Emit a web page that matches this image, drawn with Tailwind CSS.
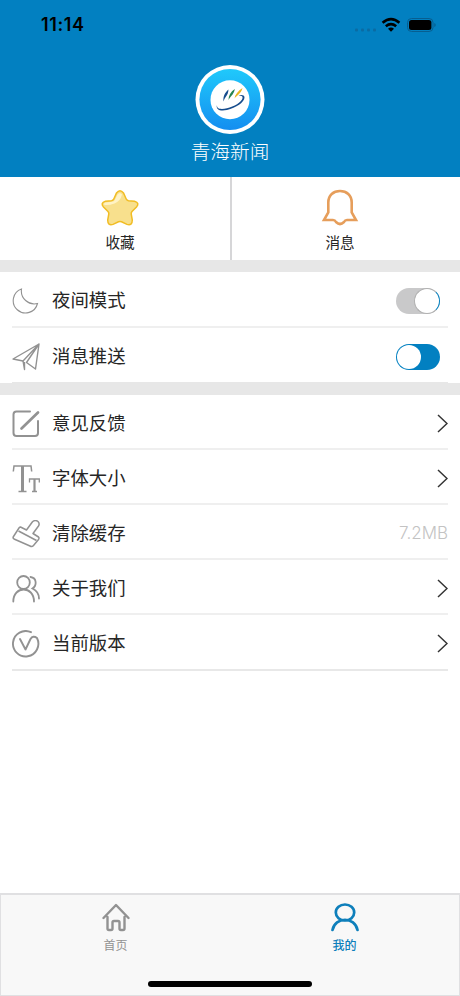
<!DOCTYPE html>
<html lang="zh-CN">
<head>
  <meta charset="UTF-8" />
  <meta name="viewport" content="width=device-width, initial-scale=1.0" />
  <title>青海新闻</title>
  <script src="https://cdn.jsdelivr.net/npm/@tailwindcss/browser@4"></script>
</head>
<body class="bg-white text-[#262626] font-['Inter','Noto_Sans_CJK_SC',sans-serif]">
<div class="w-[460px] h-[996px] flex flex-col overflow-hidden">

  <!-- Header -->
  <header class="h-[177px] shrink-0 bg-[#0280c1] flex flex-col items-center">
    <div class="w-full h-[50px] pl-[41px] pr-[24px] flex items-center justify-between text-black">
      <span class="text-[18px] font-semibold leading-none tracking-[0.6px]">11:14</span>
      <svg class="w-[82px] h-[18px]" viewBox="354 16 82 18">
        <g fill="#0a6ba3"><rect x="355" y="28.500" width="3" height="3" rx="1"/><rect x="361" y="28.500" width="3" height="3" rx="1"/><rect x="367" y="28.500" width="3" height="3" rx="1"/><rect x="373" y="28.500" width="3" height="3" rx="1"/></g>
        <g fill="none" stroke="#000" stroke-width="2.6"><path d="M382.6 22.8q8.4-7.2 16.8 0"/><path d="M385.8 26.2q5.2-4.2 10.4 0"/></g>
        <path d="M388 28.8q3-2.4 6 0l-3 3z"/>
        <rect x="407.5" y="18.5" width="25.5" height="13" rx="4" fill="none" stroke="#075e90"/>
        <rect x="409" y="20" width="22.4" height="10" rx="2.5"/>
        <path d="M434.3 23v4q1.4-.5 1.4-2t-1.4-2z" fill="#075e90"/>
      </svg>
    </div>
    <svg class="mt-[15px] w-[70px] h-[70px]" viewBox="0 0 70 70">
      <defs><linearGradient id="ring" x1="0" y1="0" x2="0" y2="1"><stop stop-color="#20c9fb"/><stop offset="1" stop-color="#148ef0"/></linearGradient></defs>
      <circle cx="35" cy="34.5" r="34.5" fill="#fff"/>
      <circle cx="35" cy="34.5" r="30.6" fill="url(#ring)"/>
      <circle cx="35" cy="34.7" r="19.5" fill="#fff"/>
      <path d="M22 40C20.500 44.500 25 46.500 32 45C41 43 49.500 37 49.500 32.500C49.500 30 46.500 29.500 43.500 30.500C46.500 30.300 48 31.300 47.500 33.300C46.500 37.500 39 41.500 32 43.200C26 44.700 21.500 44 22 40Z" fill="#164c8d"/>
      <path d="M28.500 36.500C28 31.500 29.500 28 33.500 24.500C33.300 27.500 32.500 29.500 31 31.500C29.800 33 29.300 34.500 28.500 36.500Z" fill="#164c8d"/>
      <path d="M33.500 35C33.500 30.500 35.500 27 39.800 24C39.500 27 38 29 36.500 30.800C35.300 32.300 34.500 33.300 33.500 35Z" fill="#258551"/>
      <path d="M39.500 33.500C40 29.500 43 26 47.500 23C47 26 45 28.200 43 30C41.500 31.400 40.500 32.200 39.500 33.500Z" fill="#e9b622"/>
    </svg>
    <h1 class="mt-[5px] text-[19.700px] leading-[24px] text-white font-light">青海新闻</h1>
  </header>

  <!-- Shortcuts -->
  <nav class="h-[83px] shrink-0 flex text-[14.6px] leading-[20px]">
    <a class="w-[232px] pl-[10px] border-r-2 border-[#d6d6d8] flex flex-col items-center">
      <svg class="mt-[11px] w-[40px] h-[40px]" viewBox="0 0 40 40">
        <path d="M16.500 5Q20 .5 23.500 5L26.300 11.200Q27 12.500 28.500 12.700L34.500 13.300Q40 15 36.500 19L32 23.500Q31 24.600 31.200 26L32.300 32Q32.300 38 27 36.400L21.500 33.800Q20 33.200 18.500 33.800L13 36.400Q7.700 38 7.700 32L8.800 26Q9 24.600 8 23.500L3.500 19Q0 15 5.500 13.300L11.500 12.700Q13 12.500 13.700 11.200Z" fill="#f8e08d" stroke="#f1bd25" stroke-width="1.500"/>
        <path d="M17.500 6.500Q20 3.500 22 6.500Q20.500 13 14.500 15.500Q9 17.500 4.500 17Q3 15 6 14.500L12 13.800Q14 13.500 14.800 12Z" fill="#fff3c6"/>
      </svg>
      <span class="mt-[5px]">收藏</span>
    </a>
    <a class="flex-1 pr-[12px] flex flex-col items-center">
      <svg class="mt-[11px] w-[40px] h-[40px]" viewBox="0 0 40 40" fill="none" stroke="#e69e5b" stroke-width="2.600">
        <path d="M8.300 24.500V14.500C8.300 7 13.500 3 20 3S31.700 7 31.700 14.500V24.500L36 32H27Q25 32 24 34Q20 38 16 34Q15 32 13 32H4Z"/>
      </svg>
      <span class="mt-[5px]">消息</span>
    </a>
  </nav>
  <div class="h-[12px] shrink-0 bg-[#e7e7e7]"></div>

  <!-- Switches -->
  <ul class="shrink-0 px-[12px] text-[18.4px]">
    <li class="h-[56px] pt-[4px] border-b-2 border-[#efefef] flex items-center">
      <svg class="w-[28px] h-[28px] mr-[12px]" viewBox="0 0 28 28" fill="none" stroke="#929292" stroke-width="1.100"><path d="M9.500 2A12.300 12.300 0 1 0 25.500 16.500A13 13 0 0 1 9.500 2Z"/></svg>
      <span>夜间模式</span>
      <span class="ml-auto mr-[8px] w-[44px] h-[26px] rounded-full bg-[#c9c9ca] flex justify-end">
        <i class="size-[26px] rounded-full bg-white border border-[#b0b0b0] border-r-[#0280c1] border-r-[1.5px]"></i>
      </span>
    </li>
    <li class="h-[55px] pt-[3px] border-b border-[#e7e7e7] flex items-center">
      <svg class="w-[28px] h-[28px] mr-[12px]" viewBox="0 0 28 28" fill="none" stroke="#929292" stroke-width="1.400" stroke-linejoin="round"><path d="M27 1L1 16L11 18L27 1L14.500 19.500L23.500 26Z"/><path d="M11 18L12.500 26.500V19"/></svg>
      <span>消息推送</span>
      <span class="ml-auto mr-[8px] w-[44px] h-[26px] rounded-full bg-[#0280c1] flex items-center pl-px">
        <i class="size-[24px] rounded-full bg-white"></i>
      </span>
    </li>
  </ul>
  <div class="h-[12px] shrink-0 bg-[#e7e7e7]"></div>

  <!-- Settings -->
  <ul class="shrink-0 px-[12px] text-[18.4px]">
    <li class="h-[55px] pt-[4px] border-b-2 border-[#efefef] flex items-center">
      <svg class="w-[28px] h-[28px] mr-[12px]" viewBox="0 0 28 28" fill="none" stroke="#929292" stroke-width="2" stroke-linecap="round"><path d="M18 1.500H4.500Q1.500 1.500 1.500 4.500V23Q1.500 26 4.500 26H23Q26 26 26 23V11"/><path d="M9.500 18.500L26 2.500" stroke-width="2.700"/></svg>
      <span>意见反馈</span>
      <svg class="ml-auto w-[12px] h-[20px]" viewBox="0 0 12 20" fill="none" stroke="#333" stroke-width="1.500"><path d="M2 1L11 9.500L2 18"/></svg>
    </li>
    <li class="h-[55px] pt-[4px] border-b-2 border-[#efefef] flex items-center">
      <svg class="w-[28px] h-[28px] mr-[12px]" viewBox="0 0 28 28" fill="none" stroke="#929292"><path d="M1.300 6.500L2 1H19L19.700 6.500M6.500 26.500H14.500" stroke-width="1.500"/><path d="M10.500 1V26" stroke-width="3"/><path d="M17.500 17.500V14H27.300V17.500M20 26.500H25" stroke-width="1.300"/><path d="M22.500 14V26" stroke-width="2.200"/></svg>
      <span>字体大小</span>
      <svg class="ml-auto w-[12px] h-[20px]" viewBox="0 0 12 20" fill="none" stroke="#333" stroke-width="1.500"><path d="M2 1L11 9.500L2 18"/></svg>
    </li>
    <li class="h-[55px] pt-[4px] border-b-2 border-[#efefef] flex items-center">
      <svg class="w-[28px] h-[28px] mr-[12px]" viewBox="0 0 28 28" fill="none" stroke="#929292" stroke-width="1.500" stroke-linejoin="round"><path d="M8.500 7L14.500 10L20.500 1.800Q23 -.5 26 1.500Q28 3.500 26.500 6L21 13.500L26.500 17Q27.500 18 26.500 19.500L21.500 25.500Q20 27.200 18 26L2 19Q.5 18 1.500 16.500L7 8Q7.500 6.700 8.500 7Z"/><path d="M6.500 11L24.500 20.500"/></svg>
      <span>清除缓存</span>
      <span class="ml-auto text-[17px] font-light text-[#c3c3c3]">7.2MB</span>
    </li>
    <li class="h-[55px] pt-[4px] border-b-2 border-[#efefef] flex items-center">
      <svg class="w-[28px] h-[28px] mr-[12px]" viewBox="0 0 28 28" fill="none" stroke="#929292" stroke-width="1.800" stroke-linecap="round"><ellipse cx="11.500" cy="7.500" rx="6.300" ry="6.500"/><path d="M1.300 26.500C1.300 10.500 22 10.500 22 26.500"/><path d="M18.500 2C25 3 25 10.500 20.500 13.500C24.500 15.500 27 19.500 27 23.500"/></svg>
      <span>关于我们</span>
      <svg class="ml-auto w-[12px] h-[20px]" viewBox="0 0 12 20" fill="none" stroke="#333" stroke-width="1.500"><path d="M2 1L11 9.500L2 18"/></svg>
    </li>
    <li class="h-[56px] pt-[4px] border-b-2 border-[#e8e8e8] flex items-center">
      <svg class="w-[28px] h-[28px] mr-[12px]" viewBox="0 0 28 28" fill="none" stroke="#929292" stroke-width="1.900" stroke-linecap="round" stroke-linejoin="round"><path d="M19 2.200A12.700 12.700 0 1 0 25 8Q21 5 18.500 9L13.500 19.500L8 9"/></svg>
      <span>当前版本</span>
      <svg class="ml-auto w-[12px] h-[20px]" viewBox="0 0 12 20" fill="none" stroke="#333" stroke-width="1.500"><path d="M2 1L11 9.500L2 18"/></svg>
    </li>
  </ul>

  <!-- Tab bar -->
  <footer class="mt-auto h-[103px] shrink-0 bg-[#f8f8f8] border-t-2 border-x border-b border-[#e0e0e2] flex flex-col items-center">
    <div class="w-full flex text-[12px] leading-[16px]">
      <a class="w-1/2 flex flex-col items-center text-[#929292]">
        <svg class="mt-[7px] w-[28px] h-[30px]" viewBox="0 0 28 30" fill="none" stroke="currentColor" stroke-width="2.400" stroke-linecap="round" stroke-linejoin="round"><path d="M1.500 16L14 3L26.500 16M5.500 15V26.500Q5.500 28 7 28H9Q10.500 28 10.500 26.500V20.500Q10.500 19 12 19H16Q17.500 19 17.500 20.500V26.500Q17.500 28 19 28H21Q22.500 28 22.500 26.500V15"/></svg>
        <span class="mt-[6px]">首页</span>
      </a>
      <a class="w-1/2 flex flex-col items-center text-[#0e7fbb] font-medium">
        <svg class="mt-[7px] w-[28px] h-[30px]" viewBox="0 0 28 30" fill="none" stroke="currentColor" stroke-width="2.700" stroke-linecap="round"><ellipse cx="14" cy="10.500" rx="9.200" ry="8"/><path d="M1.500 28C4 14.500 24 14.500 26.500 28"/></svg>
        <span class="mt-[6px]">我的</span>
      </a>
    </div>
    <div class="mt-auto mb-[8px] w-[164px] h-[6px] rounded-full bg-black"></div>
  </footer>

</div>
</body>
</html>
